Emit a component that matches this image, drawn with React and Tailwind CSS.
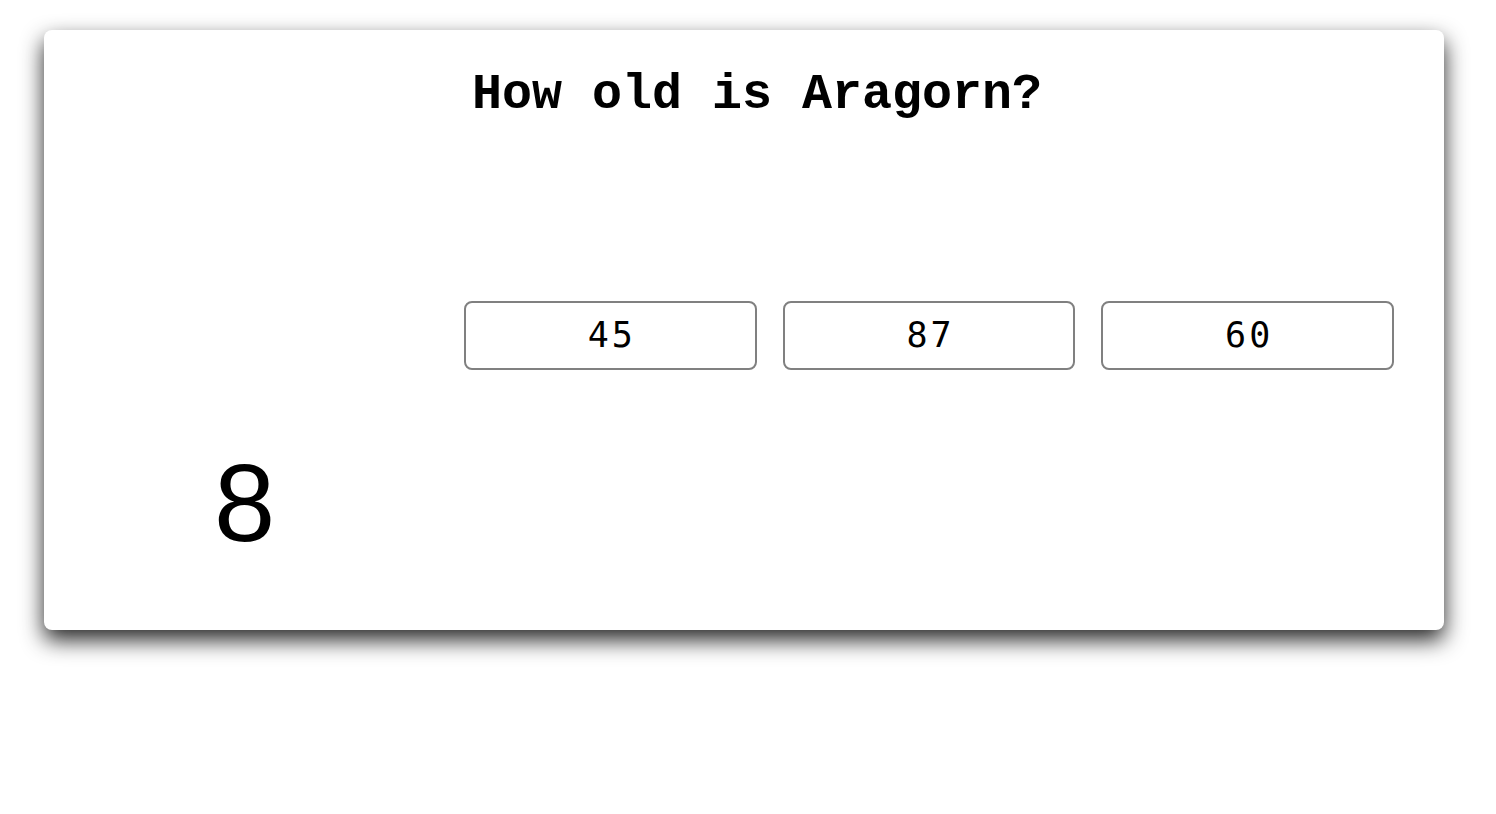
export default function App() {
  const answers = ['45', '87', '60'];

  return (
    <div className="min-h-screen bg-white">
      <div className="ml-[44px] mt-[30px] flex h-[600px] w-[1400px] flex-col rounded-lg bg-white shadow-[0_10px_22px_rgba(0,0,0,0.85)]">
        {/* QUESTION */}
        <h1 className="pl-[26px] pt-[35px] text-center font-['Liberation_Mono',monospace] text-[50px] font-bold leading-[60px] text-black">
          How old is Aragorn?
        </h1>

        {/* ANSWERS */}
        <div className="mt-[176px] grid grid-cols-3 gap-[26px] pl-[420px] pr-[50px]">
          {answers.map((a) => (
            <button
              key={a}
              className="h-[69px] rounded-lg border-2 border-[#808080] bg-white pl-[3px] font-['DejaVu_Sans_Mono',monospace] text-[35px] tracking-[3px] text-black"
            >
              {a}
            </button>
          ))}
        </div>

        {/* TIMER */}
        <div className="mt-[78px] pl-[170px] font-['Liberation_Sans',sans-serif] text-[110px] leading-none text-black">
          8
        </div>
      </div>
    </div>
  );
}
